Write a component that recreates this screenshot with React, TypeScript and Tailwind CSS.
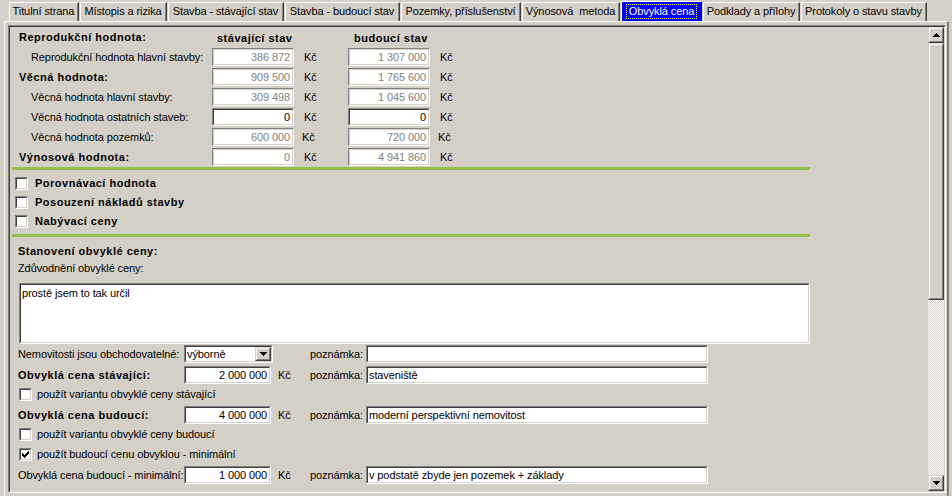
import React from "react";

const sunkenOuter = "border border-t-[#808080] border-l-[#808080] border-r-white border-b-white";
const sunkenInner = "border border-t-[#404040] border-l-[#404040] border-r-[#d4d0c8] border-b-[#d4d0c8]";
const raisedOuter = "border border-t-[#d4d0c8] border-l-[#d4d0c8] border-r-[#404040] border-b-[#404040]";
const raisedInner = "border border-t-white border-l-white border-r-[#808080] border-b-[#808080]";
const boldCls = "font-bold tracking-[0.5px]";

function Field({
  className,
  value = "",
  disabled = false,
  left = false,
}: {
  className: string;
  value?: string;
  disabled?: boolean;
  left?: boolean;
}) {
  return (
    <div className={`${className} h-[18px] shrink-0 ${sunkenOuter}`}>
      <div
        className={`h-full border ${
          disabled ? "border-[#d4d0c8]" : "border-t-[#404040] border-l-[#404040] border-r-[#d4d0c8] border-b-[#d4d0c8]"
        } bg-white flex items-center ${left ? "justify-start pl-[1px]" : "justify-end pr-[2px]"} ${
          disabled ? "text-[#808080]" : "text-black"
        } leading-none whitespace-nowrap overflow-hidden`}
      >
        {value}
      </div>
    </div>
  );
}

function Check({ checked = false }: { checked?: boolean }) {
  return (
    <div className={`w-[13px] h-[13px] shrink-0 ${sunkenOuter}`}>
      <div className={`w-full h-full ${sunkenInner} bg-white flex items-center justify-center`}>
        {checked && (
          <svg width="7" height="7" viewBox="0 0 7 7" shapeRendering="crispEdges">
            <path
              d="M0 2h1v3H0zM1 3h1v3H1zM2 4h1v3H2zM3 3h1v3H3zM4 2h1v3H4zM5 1h1v3H5zM6 0h1v3H6z"
              fill="#000"
            />
          </svg>
        )}
      </div>
    </div>
  );
}

function ArrowUp() {
  return (
    <svg width="7" height="4" viewBox="0 0 7 4" shapeRendering="crispEdges">
      <path d="M3 0h1v1H3zM2 1h3v1H2zM1 2h5v1H1zM0 3h7v1H0z" fill="#000" />
    </svg>
  );
}

function ArrowDown() {
  return (
    <svg width="7" height="4" viewBox="0 0 7 4" shapeRendering="crispEdges">
      <path d="M0 0h7v1H0zM1 1h5v1H1zM2 2h3v1H2zM3 3h1v1H3z" fill="#000" />
    </svg>
  );
}

function Raised({ className, children }: { className: string; children?: React.ReactNode }) {
  return (
    <div className={`${className} shrink-0 ${raisedOuter}`}>
      <div className={`w-full h-full ${raisedInner} bg-[#d4d0c8] flex items-center justify-center`}>{children}</div>
    </div>
  );
}

function ValRow({
  label,
  bold = false,
  v1,
  v2,
  d1 = true,
  d2 = true,
  shift = false,
  last = false,
}: {
  label: string;
  bold?: boolean;
  v1: string;
  v2: string;
  d1?: boolean;
  d2?: boolean;
  shift?: boolean;
  last?: boolean;
}) {
  return (
    <div className={`${last ? "h-[19px]" : "h-[20px]"} flex items-start`}>
      <div
        className={`w-[202px] h-[18px] flex items-center whitespace-nowrap ${bold ? `pl-[9px] ${boldCls}` : "pl-[21px]"}`}
      >
        {label}
      </div>
      <Field className="w-[82px]" value={v1} disabled={d1} />
      <div className={`w-[54px] h-[18px] flex items-center ${shift ? "pl-[8px]" : "pl-[10px]"}`}>Kč</div>
      <Field className="w-[82px]" value={v2} disabled={d2} />
      <div className={`h-[18px] flex items-center ${shift ? "pl-[8px]" : "pl-[10px]"}`}>Kč</div>
    </div>
  );
}

function CheckRow({ label }: { label: string }) {
  return (
    <div className="h-[19px] flex items-start pl-[5px]">
      <Check />
      <div className={`ml-[7px] h-[12px] flex items-center ${boldCls}`}>{label}</div>
    </div>
  );
}

function SmallCheckRow({ label, checked = false }: { label: string; checked?: boolean }) {
  return (
    <div className="h-[13px] flex items-center pl-[9px]">
      <Check checked={checked} />
      <div className="ml-[5px] h-[13px] flex items-center">{label}</div>
    </div>
  );
}

function PriceRow({
  label,
  bold = false,
  value,
  note,
}: {
  label: string;
  bold?: boolean;
  value: string;
  note: string;
}) {
  return (
    <div className="h-[18px] flex items-center">
      <div className={`w-[174px] pl-[8px] whitespace-nowrap ${bold ? boldCls : ""}`}>{label}</div>
      <Field className="w-[87px]" value={value} />
      <div className="w-[39px] pl-[7px]">Kč</div>
      <div className="w-[56px]">poznámka:</div>
      <Field className="w-[342px]" value={note} left />
    </div>
  );
}

const tabs: { label: string; w: string; active?: boolean }[] = [
  { label: "Titulní strana", w: "w-[70px]" },
  { label: "Místopis a rizika", w: "w-[87px]" },
  { label: "Stavba - stávající stav", w: "w-[116px]" },
  { label: "Stavba - budoucí stav", w: "w-[115px]" },
  { label: "Pozemky, příslušenství", w: "w-[120px]" },
  { label: "Výnosová  metoda", w: "w-[98px]" },
  { label: "Obvyklá cena", w: "w-[81px]", active: true },
  { label: "Podklady a přílohy", w: "w-[97px]" },
  { label: "Protokoly o stavu stavby", w: "w-[126px]" },
];

export default function App() {
  return (
    <div
      className="w-[952px] h-[496px] overflow-hidden bg-[#d4d0c8] text-black text-[11px] leading-[13px] tracking-[-0.1px] font-['Liberation_Sans',Arial,sans-serif] flex flex-col"
    >
      {/* Tabs */}
      <div className="h-[21px] shrink-0 flex items-end pl-[9px] gap-[1px]">
        {tabs.map((t) =>
          t.active ? (
            <div
              key={t.label}
              className={`${t.w} h-[20px] bg-[#0000ff] border-l border-t border-white border-r border-r-[#000080] flex items-center justify-center text-white`}
            >
              <div className="px-[2px] h-[15px] flex items-center border border-dotted border-[#ffff00] whitespace-pre">
                {t.label}
              </div>
            </div>
          ) : (
            <div
              key={t.label}
              className={`${t.w} h-[19px] border-l border-t border-t-white border-l-white border-r border-r-[#404040]`}
            >
              <div className="h-full border-r border-r-[#808080] flex items-center justify-center whitespace-pre pb-[1px]">
                {t.label}
              </div>
            </div>
          )
        )}
      </div>

      {/* Tab page */}
      <div className="ml-[4px] w-[945px] flex-1 border-t border-l border-t-white border-l-white border-r-2 border-r-[#808080] pl-[3px] pr-[1px] pt-[3px]">
        <div className={`h-[468px] ${sunkenOuter}`}>
          <div className={`h-full ${sunkenInner} flex`}>
            {/* Content */}
            <div className="flex-1 flex flex-col">
              {/* header */}
              <div className="h-[21px] flex items-center">
                <div className={`w-[202px] pl-[9px] ${boldCls}`}>Reprodukční hodnota:</div>
                <div className={`w-[136px] pl-[5px] pt-[2px] ${boldCls}`}>stávající stav</div>
                <div className={`pl-[6px] pt-[2px] ${boldCls}`}>budoucí stav</div>
              </div>
              <ValRow label="Reprodukční hodnota hlavní stavby:" v1="386 872" v2="1 307 000" />
              <ValRow label="Věcná hodnota:" bold v1="909 500" v2="1 765 600" />
              <ValRow label="Věcná hodnota hlavní stavby:" v1="309 498" v2="1 045 600" />
              <ValRow label="Věcná hodnota ostatních staveb:" v1="0" v2="0" d1={false} d2={false} />
              <ValRow label="Věcná hodnota pozemků:" v1="600 000" v2="720 000" shift />
              <ValRow label="Výnosová hodnota:" bold v1="0" v2="4 941 860" last />

              <div className="ml-[2px] w-[798px] h-[3px] shrink-0 bg-[#94bd4a]" />

              <div className="mt-[7px] flex flex-col">
                <CheckRow label="Porovnávací hodnota" />
                <CheckRow label="Posouzení nákladů stavby" />
                <CheckRow label="Nabývací ceny" />
              </div>

              <div className="ml-[2px] w-[798px] h-[3px] shrink-0 bg-[#94bd4a]" />

              <div className={`mt-[6px] h-[16px] flex items-center pl-[8px] ${boldCls}`}>Stanovení obvyklé ceny:</div>
              <div className="mt-[1px] h-[16px] flex items-center pl-[8px]">Zdůvodnění obvyklé ceny:</div>

              <div className={`mt-[7px] ml-[9px] w-[791px] h-[61px] shrink-0 ${sunkenOuter}`}>
                <div className={`w-full h-full ${sunkenInner} bg-white pl-[1px] pt-[2px]`}>prostě jsem to tak určil</div>
              </div>

              {/* combo row */}
              <div className="mt-[1px] h-[18px] flex items-center">
                <div className="w-[174px] pl-[8px] whitespace-nowrap">Nemovitosti jsou obchodovatelné:</div>
                <div className={`w-[89px] h-[18px] shrink-0 ${sunkenOuter}`}>
                  <div className={`w-full h-full ${sunkenInner} bg-white flex items-center`}>
                    <div className="flex-1 pl-[1px]">výborně</div>
                    <Raised className="w-[16px] h-[14px]">
                      <ArrowDown />
                    </Raised>
                  </div>
                </div>
                <div className="w-[37px]" />
                <div className="w-[56px]">poznámka:</div>
                <Field className="w-[342px]" value="" left />
              </div>

              <div className="mt-[3px]">
                <PriceRow label="Obvyklá cena stávající:" bold value="2 000 000" note="staveniště" />
              </div>
              <div className="mt-[4px]">
                <SmallCheckRow label="použít variantu obvyklé ceny stávající" />
              </div>
              <div className="mt-[5px]">
                <PriceRow label="Obvyklá cena budoucí:" bold value="4 000 000" note="moderní perspektivní nemovitost" />
              </div>
              <div className="mt-[4px]">
                <SmallCheckRow label="použít variantu obvyklé ceny budoucí" />
              </div>
              <div className="mt-[7px]">
                <SmallCheckRow label="použít budoucí cenu obvyklou - minimální" checked />
              </div>
              <div className="mt-[5px]">
                <PriceRow
                  label="Obvyklá cena budoucí - minimální:"
                  value="1 000 000"
                  note="v podstatě zbyde jen pozemek + základy"
                />
              </div>
            </div>

            {/* Scrollbar */}
            <div className="w-[16px] h-full flex flex-col shrink-0">
              <Raised className="w-[16px] h-[16px]">
                <ArrowUp />
              </Raised>
              <Raised className="w-[16px] h-[257px]" />
              <div className="flex-1 bg-[image:repeating-conic-gradient(#ffffff_0%_25%,#d4d0c8_0%_50%)] bg-[length:2px_2px]" />
              <Raised className="w-[16px] h-[16px]">
                <ArrowDown />
              </Raised>
            </div>
          </div>
        </div>
      </div>
    </div>
  );
}
